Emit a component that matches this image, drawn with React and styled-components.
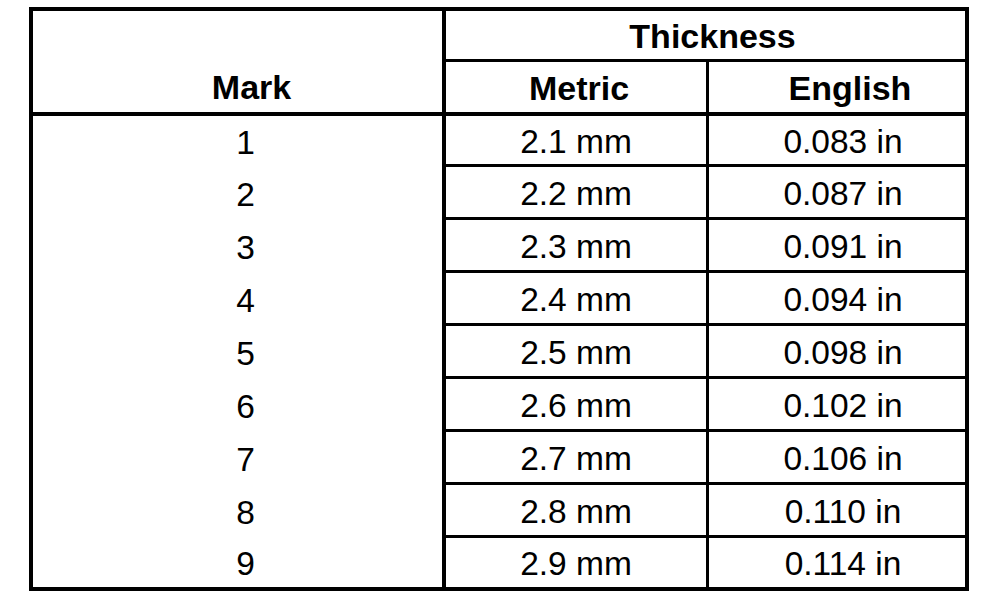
import React from 'react';
import styled, { createGlobalStyle } from 'styled-components';

const GlobalStyle = createGlobalStyle`
  html, body {
    margin: 0;
    padding: 0;
    background: #fff;
  }
  body {
    font-family: 'Liberation Sans', Arial, Helvetica, sans-serif;
    color: #000;
  }
`;

const rows = [
  { mark: '1', metric: '2.1 mm', english: '0.083 in' },
  { mark: '2', metric: '2.2 mm', english: '0.087 in' },
  { mark: '3', metric: '2.3 mm', english: '0.091 in' },
  { mark: '4', metric: '2.4 mm', english: '0.094 in' },
  { mark: '5', metric: '2.5 mm', english: '0.098 in' },
  { mark: '6', metric: '2.6 mm', english: '0.102 in' },
  { mark: '7', metric: '2.7 mm', english: '0.106 in' },
  { mark: '8', metric: '2.8 mm', english: '0.110 in' },
  { mark: '9', metric: '2.9 mm', english: '0.114 in' },
];

const Table = styled.div`
  display: grid;
  grid-template-columns: 413px 263px 256px;
  grid-template-rows: 51px 54px 51px repeat(7, 53px) 49px;
  width: 940px;
  box-sizing: border-box;
  margin: 7px 0 0 29px;
  border: 4px solid #000;
`;

const Cell = styled.div`
  display: flex;
  align-items: center;
  justify-content: center;
  box-sizing: border-box;
  padding-left: ${(p) => p.$shift || 0}px;
  padding-top: 3px;
  font-size: 33.5px;
  line-height: 1;
  border-right: ${(p) => p.$right || 0}px solid #000;
  border-bottom: ${(p) => p.$bottom || 0}px solid #000;
`;

const HeadCell = styled(Cell)`
  font-weight: bold;
  font-size: 34px;
  padding-top: 1px;
`;

const MarkHead = styled(HeadCell)`
  grid-row: span 2;
  align-items: flex-end;
  padding-bottom: 8px;
`;

const ThicknessHead = styled(HeadCell)`
  grid-column: span 2;
`;

export default function App() {
  return (
    <>
      <GlobalStyle />
      <Table>
        <MarkHead $right={4} $bottom={4} $shift={28}>
          Mark
        </MarkHead>
        <ThicknessHead $bottom={3} $shift={14}>
          Thickness
        </ThicknessHead>
        <HeadCell $right={3} $bottom={4} $shift={6}>
          Metric
        </HeadCell>
        <HeadCell $bottom={4} $shift={26}>
          English
        </HeadCell>
        {rows.map((row, i) => {
          const line = i < rows.length - 1 ? 3 : 0;
          return (
            <React.Fragment key={row.mark}>
              <Cell $right={4} $shift={16}>
                {row.mark}
              </Cell>
              <Cell $right={3} $bottom={line} $shift={0}>
                {row.metric}
              </Cell>
              <Cell $bottom={line} $shift={12}>
                {row.english}
              </Cell>
            </React.Fragment>
          );
        })}
      </Table>
    </>
  );
}
